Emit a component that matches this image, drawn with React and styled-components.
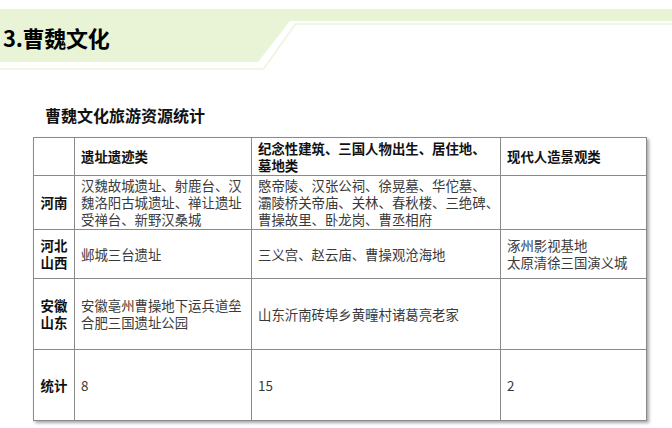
import React from "react";
import styled, { createGlobalStyle } from "styled-components";

const GlobalStyle = createGlobalStyle`
  body {
    margin: 0;
    background: #ffffff;
    font-family: "Noto Sans CJK SC", "Noto Sans", sans-serif;
  }
`;

const Page = styled.div`
  width: 672px;
  height: 428px;
  padding-top: 9px;
  box-sizing: border-box;
  overflow: hidden;
`;

const Banner = styled.div`
  position: relative;
  isolation: isolate;
  height: 63px;

  &::before {
    content: "";
    position: absolute;
    inset: 0;
    z-index: -1;
    background: #e8f4d5;
    clip-path: polygon(0 0, 100% 0, 100% 12px, 290px 12px, 258px 53px, 0 53px);
  }

  &::after {
    content: "";
    position: absolute;
    inset: 0;
    z-index: -1;
    background: #eef6e6;
    clip-path: polygon(
      0 59px, 263px 59px, 295px 14px, 100% 14px,
      100% 16px, 296px 16px, 264px 61px, 0 61px
    );
  }
`;

const Title = styled.h1`
  margin: 0;
  padding: 17px 0 0 3px;
  font-size: 22px;
  line-height: 22px;
  font-weight: 700;
  color: #000;
  letter-spacing: -0.3px;
`;

const SubTitle = styled.h2`
  margin: 35px 0 0 45px;
  font-size: 16px;
  line-height: 16px;
  font-weight: 700;
  color: #111;
`;

const Table = styled.table`
  margin: 14px 0 0 33px;
  width: 613px;
  border-collapse: collapse;
  table-layout: fixed;
  box-shadow: 2px 2px 3px rgba(0, 0, 0, 0.35);
`;

const Col = styled.col`
  width: ${(p) => p.$w}px;
`;

const Row = styled.tr`
  height: ${(p) => p.$h}px;
`;

const Cell = styled.td`
  border: 1px solid #8a8a8a;
  padding: 0 0 0 6px;
  vertical-align: middle;
  font-size: 13.4px;
  line-height: 16.7px;
  color: ${(p) => (p.$head ? "#111" : "#3a3a3a")};
  font-weight: ${(p) => (p.$head ? 700 : 400)};
  white-space: nowrap;
`;

const Label = styled.th`
  border: 1px solid #8a8a8a;
  padding: 0;
  vertical-align: middle;
  text-align: center;
  font-size: 13.4px;
  line-height: 16.7px;
  font-weight: 700;
  color: #111;
`;

const rows = [
  {
    label: ["河南"],
    h: 54,
    cells: [
      ["汉魏故城遗址、射鹿台、汉", "魏洛阳古城遗址、禅让遗址", "受禅台、新野汉桑城"],
      ["愍帝陵、汉张公祠、徐晃墓、华佗墓、", "灞陵桥关帝庙、关林、春秋楼、三绝碑、", "曹操故里、卧龙岗、曹丞相府"],
      [],
    ],
  },
  {
    label: ["河北", "山西"],
    h: 49,
    cells: [["邺城三台遗址"], ["三义宫、赵云庙、曹操观沧海地"], ["涿州影视基地", "太原清徐三国演义城"]],
  },
  {
    label: ["安徽", "山东"],
    h: 71,
    cells: [["安徽亳州曹操地下运兵道垒", "合肥三国遗址公园"], ["山东沂南砖埠乡黄疃村诸葛亮老家"], []],
  },
  {
    label: ["统计"],
    h: 71,
    cells: [["8"], ["15"], ["2"]],
  },
];

const Lines = ({ items }) =>
  items.map((t, i) => (
    <React.Fragment key={i}>
      {i > 0 && <br />}
      {t}
    </React.Fragment>
  ));

export default function App() {
  return (
    <Page>
      <GlobalStyle />
      <Banner>
        <Title>3.曹魏文化</Title>
      </Banner>
      <SubTitle>曹魏文化旅游资源统计</SubTitle>
      <Table>
        <colgroup>
          <Col $w={41} />
          <Col $w={177} />
          <Col $w={249} />
          <Col $w={146} />
        </colgroup>
        <tbody>
          <Row $h={38}>
            <Label />
            <Cell $head>遗址遗迹类</Cell>
            <Cell $head>
              <Lines items={["纪念性建筑、三国人物出生、居住地、", "墓地类"]} />
            </Cell>
            <Cell $head>现代人造景观类</Cell>
          </Row>
          {rows.map((r, i) => (
            <Row key={i} $h={r.h}>
              <Label>
                <Lines items={r.label} />
              </Label>
              {r.cells.map((c, j) => (
                <Cell key={j}>
                  <Lines items={c} />
                </Cell>
              ))}
            </Row>
          ))}
        </tbody>
      </Table>
    </Page>
  );
}
